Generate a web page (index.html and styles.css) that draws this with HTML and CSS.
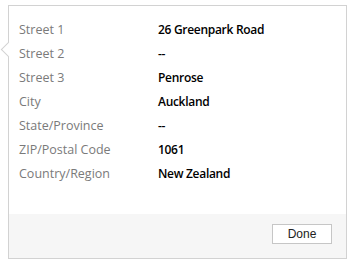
FILE: index.html
```html
<!DOCTYPE html>
<html lang="en">
<head>
  <meta charset="UTF-8">
  <meta name="viewport" content="width=device-width, initial-scale=1.0">
  <title>Address</title>
  <link rel="stylesheet" href="styles.css">
</head>
<body>
  <div class="callout">
    <div class="detalle">
      <div class="fila"><span class="etiqueta">Street 1</span><span class="valor">26 Greenpark Road</span></div>
      <div class="fila"><span class="etiqueta">Street 2</span><span class="valor">--</span></div>
      <div class="fila"><span class="etiqueta">Street 3</span><span class="valor">Penrose</span></div>
      <div class="fila"><span class="etiqueta">City</span><span class="valor">Auckland</span></div>
      <div class="fila"><span class="etiqueta">State/Province</span><span class="valor">--</span></div>
      <div class="fila"><span class="etiqueta">ZIP/Postal Code</span><span class="valor">1061</span></div>
      <div class="fila"><span class="etiqueta">Country/Region</span><span class="valor">New Zealand</span></div>
    </div>
    <div class="pie">
      <button type="button" class="boton">Done</button>
    </div>
  </div>
</body>
</html>
```

FILE: styles.css
```css
body{
  margin: 0;
  background-color: white;
  font-family: "Open Sans", "Noto Sans", sans-serif;
}
.callout{
  position: relative;
  box-sizing: border-box;
  width: 339px;
  height: 254px;
  margin: 5px 0 0 8px;
  border: solid 1px #d2d2d2;
  background: white;
  display: flex;
  flex-direction: column;
}
/* flechita del callout */
.callout::before{
  content: "";
  position: absolute;
  left: -6px;
  top: 38px;
  width: 10px;
  height: 10px;
  background: white;
  border-left: solid 1px #d2d2d2;
  border-bottom: solid 1px #d2d2d2;
  transform: rotate(45deg);
}
.detalle{
  flex: 1;
  padding: 12px 10px 0 10px;
}
.fila{
  display: flex;
  height: 24px;
  line-height: 24px;
  font-size: 12.5px;
}
.etiqueta{
  width: 139px;
  color: #7a7a7a;
}
.valor{
  color: #000;
  font-weight: 600;
  font-size: 12px;
  letter-spacing: -0.3px;
}
.pie{
  height: 44px;
  background-color: #f6f6f6;
  display: flex;
  justify-content: flex-end;
  align-items: flex-start;
  padding: 10px 14px 0 0;
  box-sizing: border-box;
}
.boton{
  width: 60px;
  height: 20px;
  padding: 0;
  border: solid 1px #c6c6c6;
  background: white;
  font-family: "Liberation Sans", Arial, sans-serif;
  font-size: 12px;
  color: #222;
  cursor: pointer;
}
```
